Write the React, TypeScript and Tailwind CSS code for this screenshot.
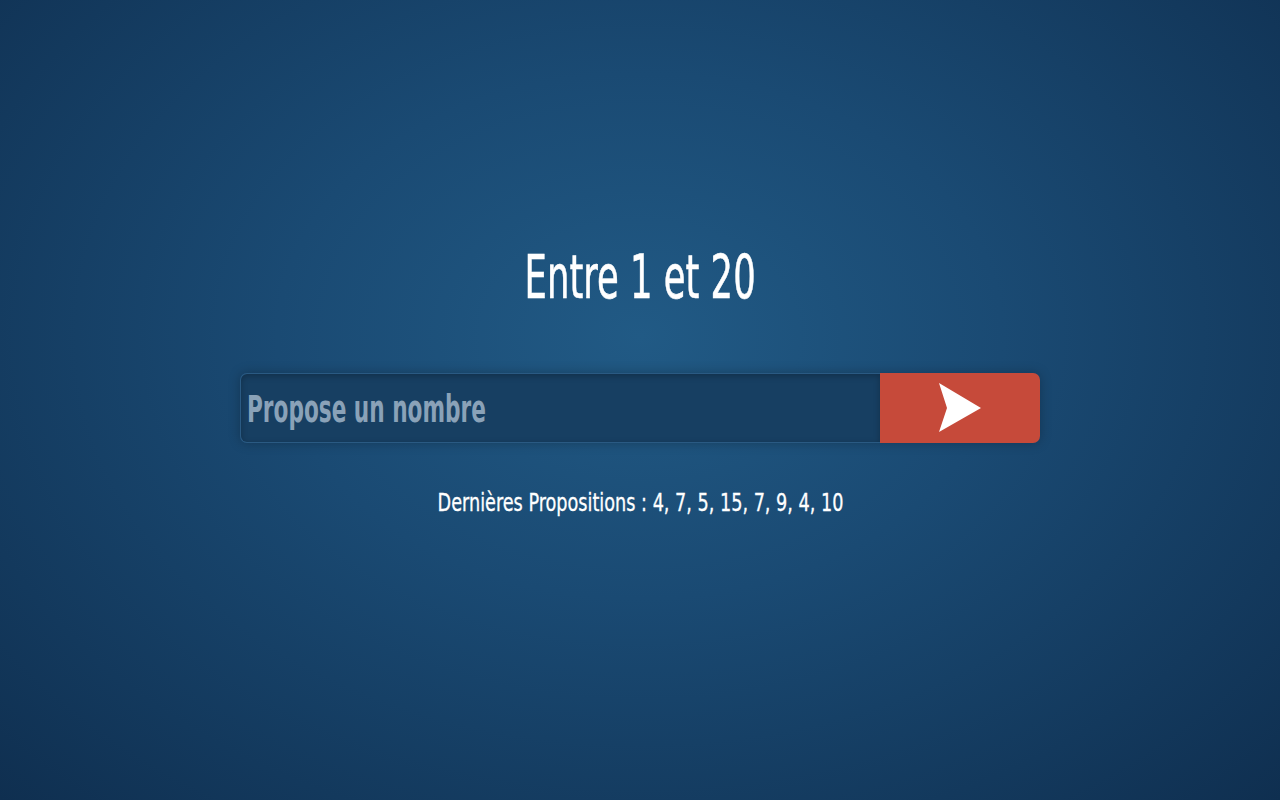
import React from "react";

export default function App() {
  const font = { fontFamily: '"DejaVu Sans Condensed", "DejaVu Sans", sans-serif' };
  return (
    <div
      className="w-full h-[800px] flex flex-col items-center bg-[radial-gradient(ellipse_at_50%_42%,#215a85_0%,#1a4a73_40%,#0f2f50_100%)]"
      style={font}
    >
      <h1 className="mt-[243px] text-white text-[61px] leading-[68px] font-normal [-webkit-text-stroke:0.6px_#ffffff]">
        <span className="inline-block scale-x-[0.645]">Entre 1 et 20</span>
      </h1>
      <div className="mt-[62px] w-[800px] h-[70px] flex rounded-[7px] shadow-[0_0_12px_rgba(0,0,0,0.25)]">
        <div className="flex-1 flex items-center rounded-l-[7px] bg-[#173f62] border border-[#2a5a83] border-r-0 shadow-[inset_0_2px_6px_rgba(0,0,0,0.25)] overflow-hidden">
          <span className="ml-[6px] mt-[3px] inline-block origin-left scale-x-[0.65] whitespace-nowrap text-[37px] text-[#8aa2b8] font-bold">
            Propose un nombre
          </span>
        </div>
        <div className="w-[160px] flex items-center justify-center rounded-r-[7px] bg-[#c64a3a]">
          <svg width="46" height="52" viewBox="0 0 46 52">
            <path d="M2 1 L44 26 L2 50 L10 26 Z" fill="#ffffff" />
          </svg>
        </div>
      </div>
      <p className="mt-[42px] text-white text-[25px] leading-[36px] font-normal whitespace-nowrap [-webkit-text-stroke:0.3px_#ffffff]">
        <span className="inline-block scale-x-[0.785]">Dernières Propositions : 4, 7, 5, 15, 7, 9, 4, 10</span>
      </p>
    </div>
  );
}
